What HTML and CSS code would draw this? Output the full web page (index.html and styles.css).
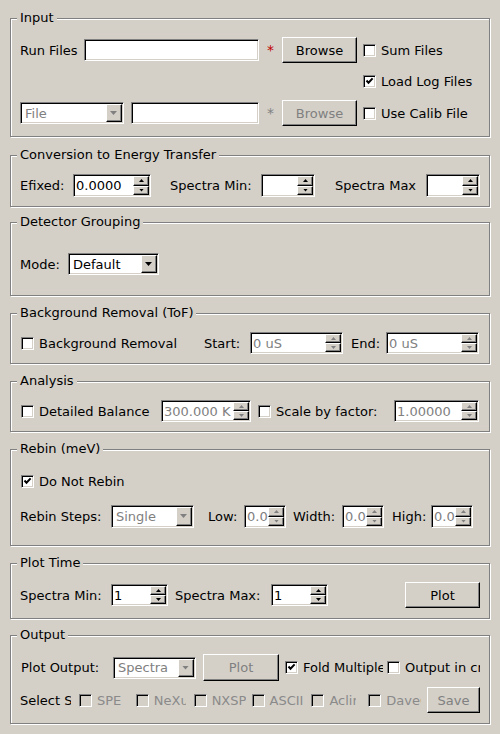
FILE: index.html
```html
<!DOCTYPE html>
<html>
<head>
<meta charset="utf-8">
<title>Convert to Energy</title>
<link rel="stylesheet" href="styles.css">
</head>
<body>
<div class="page">

  <section class="group g-input">
    <span class="title">Input</span>
    <div class="row in-row r1">
      <span class="lbl">Run Files</span>
      <span class="edit"></span>
      <span class="star">*</span>
      <span class="btn">Browse</span>
      <label class="chk pl6"><span class="box"></span>Sum Files</label>
    </div>
    <div class="row in-row r2">
      <label class="chk pl6 col5"><span class="box"><svg width="13" height="13" viewBox="0 0 13 13"><path d="M3.5 5.5 L5.5 7.8 L9.6 3.4" fill="none" stroke="#000" stroke-width="2"/></svg></span>Load Log Files</label>
    </div>
    <div class="row in-row r3">
      <span class="pair">
        <span class="combo dis c104"><span class="cv">File</span><span class="cb"></span></span>
        <span class="edit grow"></span>
      </span>
      <span class="star dis">*</span>
      <span class="btn dis">Browse</span>
      <label class="chk pl6"><span class="box"></span>Use Calib File</label>
    </div>
  </section>

  <section class="group g-conv">
    <span class="title">Conversion to Energy Transfer</span>
    <div class="row cv-row">
      <span class="lbl">Efixed:</span>
      <span class="spin t23"><span class="sv">0.0000</span><span class="sbs"><span class="sb up"></span><span class="sb dn"></span></span></span>
      <span class="lbl pl19">Spectra Min:</span>
      <span class="spin t23"><span class="sv"></span><span class="sbs"><span class="sb up"></span><span class="sb dn"></span></span></span>
      <span class="lbl pl20">Spectra Max</span>
      <span class="spin t23"><span class="sv"></span><span class="sbs"><span class="sb up"></span><span class="sb dn"></span></span></span>
    </div>
  </section>

  <section class="group g-det">
    <span class="title">Detector Grouping</span>
    <div class="row dg-row">
      <span class="lbl">Mode:</span>
      <span class="combo"><span class="cv">Default</span><span class="cb"></span></span>
    </div>
  </section>

  <section class="group g-bg">
    <span class="title">Background Removal (ToF)</span>
    <div class="row bg-row">
      <label class="chk pl1"><span class="box"></span>Background Removal</label>
      <span class="lbl">Start:</span>
      <span class="spin dis"><span class="sv">0 uS</span><span class="sbs"><span class="sb up"></span><span class="sb dn"></span></span></span>
      <span class="lbl pl8">End:</span>
      <span class="spin dis"><span class="sv">0 uS</span><span class="sbs"><span class="sb up"></span><span class="sb dn"></span></span></span>
    </div>
  </section>

  <section class="group g-ana">
    <span class="title">Analysis</span>
    <div class="row an-row">
      <label class="chk pl1"><span class="box"></span>Detailed Balance</label>
      <span class="spin dis"><span class="sv">300.000 K</span><span class="sbs"><span class="sb up"></span><span class="sb dn"></span></span></span>
      <label class="chk pl7"><span class="box"></span>Scale by factor:</label>
      <span class="spin dis"><span class="sv">1.00000</span><span class="sbs"><span class="sb up"></span><span class="sb dn"></span></span></span>
    </div>
  </section>

  <section class="group g-rebin">
    <span class="title">Rebin (meV)</span>
    <div class="row rb-row1">
      <label class="chk pl1"><span class="box"><svg width="13" height="13" viewBox="0 0 13 13"><path d="M3.5 5.5 L5.5 7.8 L9.6 3.4" fill="none" stroke="#000" stroke-width="2"/></svg></span>Do Not Rebin</label>
    </div>
    <div class="row rb-row2">
      <span class="lbl">Rebin Steps:</span>
      <span class="combo dis t23"><span class="cv">Single</span><span class="cb"></span></span>
      <span class="lbl pl14">Low:</span>
      <span class="spin dis t23"><span class="sv">0.0</span><span class="sbs"><span class="sb up"></span><span class="sb dn"></span></span></span>
      <span class="lbl pl7">Width:</span>
      <span class="spin dis t23"><span class="sv">0.0</span><span class="sbs"><span class="sb up"></span><span class="sb dn"></span></span></span>
      <span class="lbl pl8">High:</span>
      <span class="spin dis t23"><span class="sv">0.0</span><span class="sbs"><span class="sb up"></span><span class="sb dn"></span></span></span>
    </div>
  </section>

  <section class="group g-plot">
    <span class="title">Plot Time</span>
    <div class="row pt-row">
      <span class="lbl">Spectra Min:</span>
      <span class="spin"><span class="sv">1</span><span class="sbs"><span class="sb up"></span><span class="sb dn"></span></span></span>
      <span class="lbl pl7">Spectra Max:</span>
      <span class="spin"><span class="sv">1</span><span class="sbs"><span class="sb up"></span><span class="sb dn"></span></span></span>
      <span></span>
      <span class="btn">Plot</span>
    </div>
  </section>

  <section class="group g-out">
    <span class="title">Output</span>
    <div class="row out-row1">
      <span class="lbl pl1">Plot Output:</span>
      <span class="combo dis"><span class="cv">Spectra</span><span class="cb"></span></span>
      <span class="btn dis b76">Plot</span>
      <label class="chk pl6"><span class="box"><svg width="13" height="13" viewBox="0 0 13 13"><path d="M3.5 5.5 L5.5 7.8 L9.6 3.4" fill="none" stroke="#000" stroke-width="2"/></svg></span>Fold Multiple Spectra</label>
      <label class="chk pl4"><span class="box"></span>Output in cm-1</label>
    </div>
    <div class="row out-row2">
      <span class="lbl clip">Select Save Format:</span>
      <label class="chk dis"><span class="box"></span>SPE</label>
      <label class="chk dis"><span class="box"></span>NeXus</label>
      <label class="chk dis"><span class="box"></span>NXSPE</label>
      <label class="chk dis"><span class="box"></span>ASCII</label>
      <label class="chk dis"><span class="box"></span>Aclimax</label>
      <label class="chk dis"><span class="box"></span>DaveGrp</label>
      <span class="btn dis">Save</span>
    </div>
  </section>

</div>
</body>
</html>
```

FILE: styles.css
```css
* { box-sizing: border-box; }
html, body { margin: 0; padding: 0; }
body {
  background: #d4d0c8;
  font-family: "DejaVu Sans", "Liberation Sans", sans-serif;
  font-size: 13px;
  color: #000;
  width: 500px;
  height: 734px;
  overflow: hidden;
}
.page { padding: 18px 10px 0 10px; }

/* group boxes: etched frame */
.group {
  position: relative;
  border: 1px solid #808080;
  box-shadow: 1px 1px 0 #fff, inset 1px 1px 0 #fff;
  padding: 18px 9px 9px 9px;
}
.title {
  position: absolute;
  top: -9px;
  left: 6px;
  padding: 0 3px 0 3px;
  line-height: 15px;
  background: #d4d0c8;
  white-space: nowrap;
}
.g-input { padding-bottom: 10px; }
.g-conv  { margin-top: 18px; }
.g-det   { margin-top: 15px; padding-top: 30px; padding-bottom: 20px; }
.g-bg    { margin-top: 17px; }
.g-ana   { margin-top: 17px; }
.g-rebin { margin-top: 17px; padding-top: 21px; padding-bottom: 17px; }
.g-plot  { margin-top: 17px; padding-bottom: 10px; }
.g-out   { margin-top: 16px; padding-bottom: 10px; }

/* rows */
.row { display: grid; align-items: center; }
.in-row { grid-template-columns: 64px 175px 23px 75px 1fr; }
.in-row.r1 { height: 26px; }
.in-row.r2 { height: 20px; margin-top: 8px; }
.in-row.r3 { height: 26px; margin-top: 9px; }
.col5 { grid-column: 5; }
.pair { grid-column: 1 / 3; display: flex; gap: 7px; align-items: center; }
.c104 { width: 104px; flex: none; }
.grow { flex: 1; }

.cv-row { grid-template-columns: 53px 78px 110px 54px 111px 54px; height: 23px; }
.dg-row { grid-template-columns: 48px 91px; height: 22px; }
.bg-row { grid-template-columns: 184px 46px 93px 43px 93px; height: 22px; }
.an-row { grid-template-columns: 141px 90px 143px 85px; height: 22px; }
.rb-row1 { grid-template-columns: 1fr; height: 20px; }
.rb-row2 { grid-template-columns: 91px 83px 50px 42px 56px 42px 47px 42px; height: 23px; margin-top: 14px; }
.pt-row { grid-template-columns: 91px 57px 103px 57px 77px 75px; height: 26px; }
.out-row1 { grid-template-columns: 93px 83px 83px 104px 97px; height: 27px; }
.out-row2 { display: flex; align-items: center; height: 26px; margin-top: 6px; }

.out-row2 > :nth-child(1) { width: 51px; margin-right: 8px; }
.out-row2 > :nth-child(2) { width: 50px; margin-right: 7px; }
.out-row2 > :nth-child(3) { width: 50px; margin-right: 8px; }
.out-row2 > :nth-child(4) { width: 52px; margin-right: 6px; }
.out-row2 > :nth-child(5) { width: 52px; margin-right: 8px; }
.out-row2 > :nth-child(6) { width: 45px; margin-right: 12px; }
.out-row2 > :nth-child(7) { width: 53px; margin-right: 6px; }
.out-row2 > :nth-child(8) { width: 53px; }

.lbl { white-space: nowrap; }
.clip { overflow: hidden; }
.pl1 { padding-left: 1px; }
.pl4 { padding-left: 4px; }
.pl6 { padding-left: 6px; }
.pl7 { padding-left: 7px; }
.pl8 { padding-left: 8px; }
.pl14 { padding-left: 14px; }
.pl19 { padding-left: 19px; }
.pl20 { padding-left: 20px; }

/* sunken fields */
.edit, .spin, .combo, .box {
  background: #fff;
  border: 1px solid;
  border-color: #808080 #fff #fff #808080;
  box-shadow: inset 1px 1px 0 #000, inset -1px -1px 0 #d4d0c8;
}
.edit { display: block; height: 22px; }

.spin, .combo {
  display: flex;
  height: 22px;
  padding: 1px;
  overflow: hidden;
}
.t23 { height: 23px; }
.sv, .cv {
  flex: 1;
  min-width: 0;
  overflow: hidden;
  white-space: nowrap;
  padding-left: 1px;
  display: flex;
  align-items: center;
}
.cv { padding-left: 3px; }
.dis .sv, .dis .cv { color: #808080; }

.sbs { width: 16px; flex: none; display: flex; flex-direction: column; }
.sb {
  flex: 1;
  position: relative;
  background: #d4d0c8;
  border: 1px solid;
  border-color: #fff #000 #000 #fff;
  box-shadow: inset -1px -1px 0 #808080;
}
.sb::after {
  content: "";
  position: absolute;
  left: 5px;
  top: 2px;
  width: 5px;
  height: 3px;
  background: #000;
}
.sb.up::after { clip-path: polygon(50% 0, 100% 100%, 0 100%); }
.sb.dn::after { clip-path: polygon(0 0, 100% 0, 50% 100%); }
.dis .sb::after { background: #808080; }

.cb {
  width: 16px;
  flex: none;
  position: relative;
  background: #d4d0c8;
  border: 1px solid;
  border-color: #fff #000 #000 #fff;
  box-shadow: inset -1px -1px 0 #808080;
}
.cb::after {
  content: "";
  position: absolute;
  left: 3px;
  top: 6px;
  width: 7px;
  height: 4px;
  background: #000;
  clip-path: polygon(0 0, 100% 0, 50% 100%);
}
.dis .cb::after { background: #808080; }

/* buttons */
.btn {
  display: flex;
  align-items: center;
  justify-content: center;
  height: 26px;
  background: #d4d0c8;
  border: 1px solid;
  border-color: #fff #000 #000 #fff;
  box-shadow: inset -1px -1px 0 #808080;
  white-space: nowrap;
}
.btn.dis { color: #808080; }
.b76 { width: 76px; justify-self: end; height: 27px; }

.star { text-align: center; color: #c00000; font-size: 14px; }
.star.dis { color: #808080; }

/* check boxes */
.chk {
  display: flex;
  align-items: center;
  white-space: nowrap;
  overflow: hidden;
}
.box {
  width: 13px;
  height: 13px;
  flex: none;
  margin-right: 5px;
  position: relative;
}
.box svg { position: absolute; left: -1px; top: -1px; }
.chk.dis { color: #8a8a8a; }
.chk.dis .box { background: #d4d0c8; }
```
